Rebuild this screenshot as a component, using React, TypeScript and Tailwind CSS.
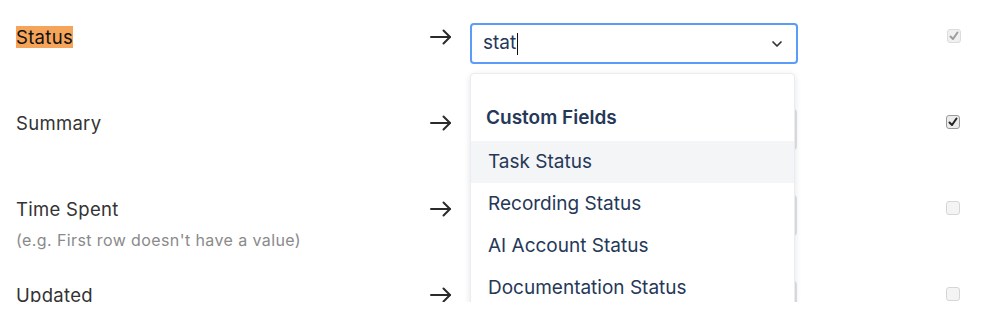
import { ChevronDown } from 'lucide-react'

const FONT = { fontFamily: 'Inter, "Liberation Sans", sans-serif' }

type Row = { label: string; hint?: string; checked: boolean; disabled?: boolean }

const ROWS: Row[] = [
  { label: 'Status', checked: true, disabled: true },
  { label: 'Summary', checked: true },
  { label: 'Time Spent', hint: "(e.g. First row doesn't have a value)", checked: false },
  { label: 'Updated', checked: false },
]

const OPTIONS = ['Task Status', 'Recording Status', 'AI Account Status', 'Documentation Status']

function Arrow() {
  return (
    <svg width="22" height="16" viewBox="0 0 22 16" fill="none" stroke="#2b2b2b" strokeWidth="2" strokeLinecap="round" strokeLinejoin="round">
      <path d="M1 8h19" />
      <path d="M13.5 1.5 20 8l-6.5 6.5" />
    </svg>
  )
}

function Checkbox({ checked, disabled }: { checked: boolean; disabled?: boolean }) {
  return (
    <span
      className={`flex items-center justify-center w-[14px] h-[14px] rounded-[3px] border ${
        disabled ? 'border-[#dcdcdc] bg-[#f0f0f0]' : checked ? 'border-[#9a9a9a] bg-[#ececec]' : 'border-[#d6d6d6] bg-[#f4f4f4]'
      }`}
    >
      {checked && (
        <svg width="10" height="10" viewBox="0 0 10 10" fill="none" stroke={disabled ? '#9d9d9d' : '#222'} strokeWidth="2" strokeLinecap="round" strokeLinejoin="round">
          <path d="M1.5 5.5 4 8l4.5-6.5" />
        </svg>
      )}
    </span>
  )
}

export default function App() {
  return (
    <div className="w-[998px] h-[319px] bg-white" style={FONT}>
      <div className="relative h-[302px] overflow-hidden">
        <div className="pt-[23px] pl-4">
          {ROWS.map((row, i) => (
            <div key={row.label} className="flex items-start h-[86px]">
              {/* Label */}
              <div className="w-[414px] pt-[3px]">
                <span
                  className={`text-[18.5px] leading-[22px] tracking-[0.3px] ${
                    i === 0 ? 'bg-[#f6a45a] text-[#111]' : 'text-[#333]'
                  }`}
                >
                  {row.label}
                </span>
                {row.hint && (
                  <p className="mt-[9px] text-[16px] leading-[18px] tracking-[0.4px] text-[#8a8a8a]">{row.hint}</p>
                )}
              </div>

              {/* Arrow */}
              <div className="w-[40px] pt-[6px]">
                <Arrow />
              </div>

              {/* Field */}
              {i === 0 ? (
                <div className="flex items-center w-[328px] h-[41px] px-[11px] rounded-[4px] border-2 border-[#5a9cf8] bg-white">
                  <span className="text-[19px] text-[#253858]">stat</span>
                  <span className="w-px h-[22px] bg-[#111] ml-[1px]" />
                  <ChevronDown className="ml-auto w-4 h-4 text-[#333]" strokeWidth={2.6} />
                </div>
              ) : (
                <div className="w-[327px] h-[41px] rounded-[4px] border-2 border-[#dfe1e6] bg-[#fafbfc]" />
              )}

              {/* Checkbox */}
              <div className="ml-[149px] pt-[6px]">
                <Checkbox checked={row.checked} disabled={row.disabled} />
              </div>
            </div>
          ))}
        </div>

        {/* Dropdown menu */}
        <div className="absolute left-[470px] top-[73px] w-[325px] h-[300px] rounded-[4px] border border-[#ebecf0] bg-white shadow-[0_2px_6px_rgba(9,30,66,0.12)]">
          <div className="h-[25px]" />
          <div className="px-[15px] py-[8px] text-[19px] leading-[22px] font-semibold text-[#253858]">Custom Fields</div>
          <div className="mt-[4px]">
            {OPTIONS.map((opt, i) => (
              <div
                key={opt}
                className={`h-[42px] flex items-center px-[17px] text-[19px] text-[#253858] ${i === 0 ? 'bg-[#f4f5f7]' : ''}`}
              >
                {opt}
              </div>
            ))}
          </div>
        </div>
      </div>
    </div>
  )
}
